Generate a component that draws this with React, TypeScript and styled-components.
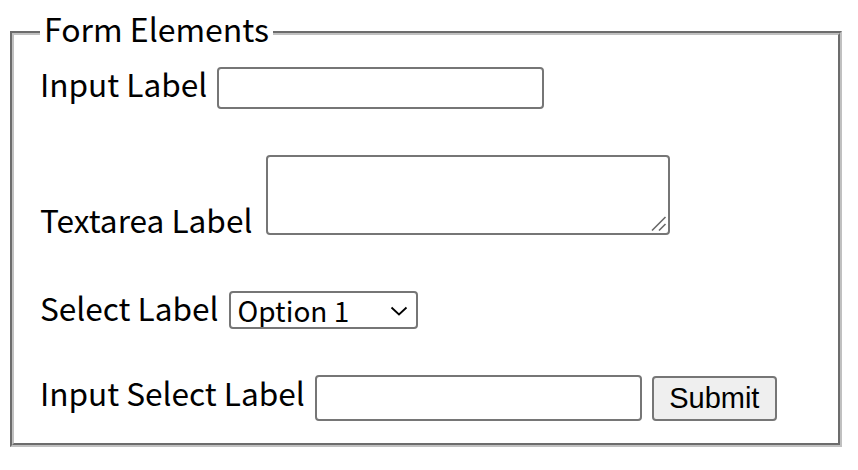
import React from 'react'
import styled, { createGlobalStyle } from 'styled-components'

const GlobalStyle = createGlobalStyle`
  html, body {
    margin: 0;
    padding: 0;
    background: #fff;
  }
  body {
    font-family: 'Noto Sans CJK KR', 'Noto Sans', sans-serif;
    color: #000;
  }
`

const Page = styled.form`
  box-sizing: border-box;
  width: 858px;
  padding: 12px 0 0 10px;
`

const Fieldset = styled.fieldset`
  box-sizing: border-box;
  width: 832px;
  margin: 0;
  padding: 0 0 22px 26px;
  border: 4px groove #c0c0c0;
  display: flex;
  flex-direction: column;
  align-items: flex-start;
`

const Legend = styled.legend`
  padding: 0 4px 9px;
  font-size: 32px;
  line-height: 32px;
`

const Row = styled.div<{ $top: number; $gap?: number }>`
  display: flex;
  align-items: flex-end;
  gap: ${({ $gap }) => $gap ?? 10}px;
  margin-top: ${({ $top }) => $top}px;
`

const Label = styled.label<{ $drop: number }>`
  font-size: 31.6px;
  line-height: 32px;
  white-space: nowrap;
  margin-bottom: ${({ $drop }) => $drop}px;
`

const TextInput = styled.input<{ $h: number }>`
  box-sizing: border-box;
  width: 327px;
  height: ${({ $h }) => $h}px;
  margin: 0;
  padding: 2px 4px;
  border: 2px solid #767676;
  border-radius: 4px;
  background: #fff;
  font-family: 'Liberation Sans', Arial, sans-serif;
  font-size: 26px;
  outline: none;
`

const Overlay = styled.span`
  position: relative;
  display: inline-flex;
`

const TextArea = styled.textarea`
  box-sizing: border-box;
  width: 404px;
  height: 80px;
  margin: 0;
  padding: 4px;
  border: 2px solid #767676;
  border-radius: 4px;
  resize: none;
  font-family: 'Liberation Mono', monospace;
  font-size: 26px;
  outline: none;
`

const Grip = styled.svg`
  position: absolute;
  right: 3px;
  bottom: 3px;
  width: 17px;
  height: 17px;
  pointer-events: none;
`

const Select = styled.select`
  box-sizing: border-box;
  appearance: none;
  width: 189px;
  height: 38px;
  margin: 0;
  padding: 0 30px 0 7px;
  border: 2px solid #767676;
  border-radius: 4px;
  background: #fff;
  color: #000;
  font-family: 'Noto Sans CJK KR', 'Noto Sans', sans-serif;
  font-size: 28px;
  line-height: 34px;
  outline: none;
`

const Chevron = styled.svg`
  position: absolute;
  right: 10px;
  top: 15px;
  width: 18px;
  height: 10px;
  pointer-events: none;
`

const Button = styled.button`
  box-sizing: border-box;
  width: 125px;
  height: 45px;
  margin: 0;
  padding: 0;
  border: 2px solid #767676;
  border-radius: 4px;
  background: #efefef;
  color: #000;
  font-family: 'Liberation Sans', Arial, sans-serif;
  font-size: 29px;
`

export default function App() {
  return (
    <>
      <GlobalStyle />
      <Page onSubmit={e => e.preventDefault()}>
        <Fieldset>
          <Legend>Form Elements</Legend>

          <Row $top={14}>
            <Label $drop={10} htmlFor="input">Input Label</Label>
            <TextInput id="input" type="text" $h={42} />
          </Row>

          <Row $top={46} $gap={14}>
            <Label $drop={0} htmlFor="textarea">Textarea Label</Label>
            <Overlay>
              <TextArea id="textarea" />
              <Grip viewBox="0 0 17 17">
                <path d="M15.5 2 L2 15.5 M15.5 9 L9 15.5" stroke="#6a6a6a" strokeWidth="1.6" fill="none" />
              </Grip>
            </Overlay>
          </Row>

          <Row $top={56}>
            <Label $drop={6} htmlFor="select">Select Label</Label>
            <Overlay>
              <Select id="select" defaultValue="1">
                <option value="1">Option 1</option>
                <option value="2">Option 2</option>
                <option value="3">Option 3</option>
              </Select>
              <Chevron viewBox="0 0 18 10">
                <path d="M1.5 1.5 L9 8.5 L16.5 1.5" stroke="#000" strokeWidth="1.8" fill="none" />
              </Chevron>
            </Overlay>
          </Row>

          <Row $top={46}>
            <Label $drop={13} htmlFor="combo">Input Select Label</Label>
            <TextInput id="combo" type="text" $h={46} />
            <Button type="submit">Submit</Button>
          </Row>
        </Fieldset>
      </Page>
    </>
  )
}
